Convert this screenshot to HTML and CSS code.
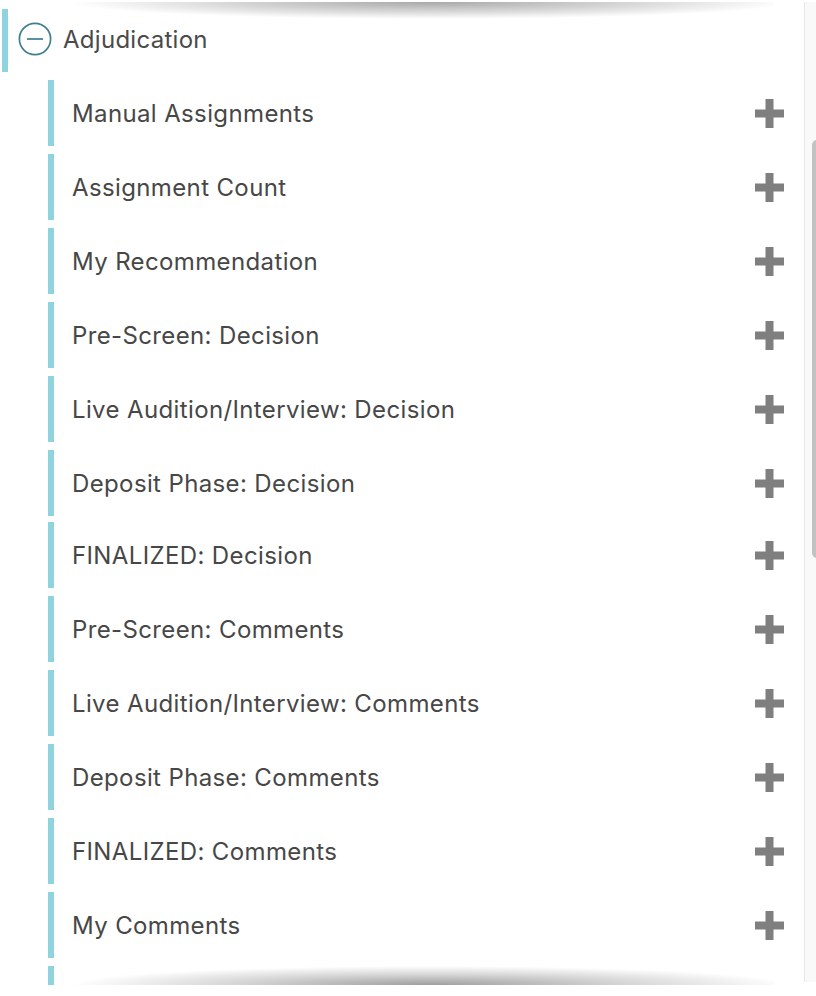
FILE: index.html
```html
<!DOCTYPE html>
<html lang="en">
<head>
<meta charset="utf-8">
<title>Adjudication</title>
<link rel="stylesheet" href="styles.css">
</head>
<body>
<div class="page">
  <div class="main">
    <div class="header">
      <svg class="minus-icon" width="34" height="34" viewBox="0 0 34 34">
        <circle cx="17" cy="17" r="15.6" fill="none" stroke="#3e7e92" stroke-width="1.7"/>
        <line x1="9" y1="17" x2="25" y2="17" stroke="#3e7e92" stroke-width="1.7"/>
      </svg>
      <span class="header-title">Adjudication</span>
    </div>
    <ul class="items">
      <li class="item"><span class="label">Manual Assignments</span><svg class="plus" width="29" height="29" viewBox="0 0 29 29"><rect x="0" y="10.5" width="29" height="8"/><rect x="10.5" y="0" width="8" height="29"/></svg></li>
      <li class="item"><span class="label">Assignment Count</span><svg class="plus" width="29" height="29" viewBox="0 0 29 29"><rect x="0" y="10.5" width="29" height="8"/><rect x="10.5" y="0" width="8" height="29"/></svg></li>
      <li class="item"><span class="label">My Recommendation</span><svg class="plus" width="29" height="29" viewBox="0 0 29 29"><rect x="0" y="10.5" width="29" height="8"/><rect x="10.5" y="0" width="8" height="29"/></svg></li>
      <li class="item"><span class="label">Pre-Screen: Decision</span><svg class="plus" width="29" height="29" viewBox="0 0 29 29"><rect x="0" y="10.5" width="29" height="8"/><rect x="10.5" y="0" width="8" height="29"/></svg></li>
      <li class="item"><span class="label">Live Audition/Interview: Decision</span><svg class="plus" width="29" height="29" viewBox="0 0 29 29"><rect x="0" y="10.5" width="29" height="8"/><rect x="10.5" y="0" width="8" height="29"/></svg></li>
      <li class="item"><span class="label">Deposit Phase: Decision</span><svg class="plus" width="29" height="29" viewBox="0 0 29 29"><rect x="0" y="10.5" width="29" height="8"/><rect x="10.5" y="0" width="8" height="29"/></svg></li>
      <li class="item item-tight"><span class="label">FINALIZED: Decision</span><svg class="plus" width="29" height="29" viewBox="0 0 29 29"><rect x="0" y="10.5" width="29" height="8"/><rect x="10.5" y="0" width="8" height="29"/></svg></li>
      <li class="item"><span class="label">Pre-Screen: Comments</span><svg class="plus" width="29" height="29" viewBox="0 0 29 29"><rect x="0" y="10.5" width="29" height="8"/><rect x="10.5" y="0" width="8" height="29"/></svg></li>
      <li class="item"><span class="label">Live Audition/Interview: Comments</span><svg class="plus" width="29" height="29" viewBox="0 0 29 29"><rect x="0" y="10.5" width="29" height="8"/><rect x="10.5" y="0" width="8" height="29"/></svg></li>
      <li class="item"><span class="label">Deposit Phase: Comments</span><svg class="plus" width="29" height="29" viewBox="0 0 29 29"><rect x="0" y="10.5" width="29" height="8"/><rect x="10.5" y="0" width="8" height="29"/></svg></li>
      <li class="item"><span class="label">FINALIZED: Comments</span><svg class="plus" width="29" height="29" viewBox="0 0 29 29"><rect x="0" y="10.5" width="29" height="8"/><rect x="10.5" y="0" width="8" height="29"/></svg></li>
      <li class="item"><span class="label">My Comments</span><svg class="plus" width="29" height="29" viewBox="0 0 29 29"><rect x="0" y="10.5" width="29" height="8"/><rect x="10.5" y="0" width="8" height="29"/></svg></li>
      <li class="item"><span class="label">&nbsp;</span></li>
    </ul>
    <div class="shadow shadow-top"></div>
    <div class="shadow shadow-bottom"></div>
  </div>
  <div class="scrollbar">
    <div class="thumb"></div>
  </div>
</div>
</body>
</html>
```

FILE: styles.css
```css
html, body {
  margin: 0;
  padding: 0;
  background: #ffffff;
}

body {
  font-family: Inter, "Liberation Sans", Arial, sans-serif;
  color: #484848;
}

.page {
  display: flex;
  height: 985px;
  overflow: hidden;
  width: 816px;
}

.main {
  position: relative;
  flex: 0 0 804px;
  padding-left: 2px;
  box-sizing: border-box;
  overflow: hidden;
}

.header {
  display: flex;
  align-items: center;
  margin-top: 9px;
  height: 63px;
  border-left: 6px solid #8fd3de;
  padding-left: 10px;
}

.minus-icon {
  display: block;
  margin-top: -3px;
}

.header-title {
  margin-left: 11px;
  font-size: 24px;
  color: #4a4a4a;
  letter-spacing: 0.28px;
  margin-top: -2px;
}

.items {
  list-style: none;
  margin: 8px 0 0 46px;
  padding: 0;
  display: flex;
  flex-direction: column;
  gap: 8px;
}

.item {
  display: flex;
  align-items: center;
  justify-content: space-between;
  height: 66px;
  flex: 0 0 66px;
  border-left: 6px solid #8fd3de;
  padding-left: 18px;
  padding-right: 20px;
}

.item-tight {
  margin-top: -2px;
}

.label {
  font-size: 24px;
  color: #474747;
  letter-spacing: 0.37px;
}

.plus {
  display: block;
  fill: #7f7f7f;
}

.shadow {
  position: absolute;
  left: 58px;
  width: 716px;
  pointer-events: none;
}

.shadow-top {
  top: 2px;
  height: 17px;
  background: radial-gradient(ellipse 360px 17px at 52% 0%, rgba(0,0,0,0.34) 0%, rgba(0,0,0,0.16) 55%, rgba(0,0,0,0) 100%);
}

.shadow-bottom {
  top: 966px;
  height: 19px;
  background: radial-gradient(ellipse 360px 19px at 52% 100%, rgba(0,0,0,0.38) 0%, rgba(0,0,0,0.16) 55%, rgba(0,0,0,0) 100%);
}

.scrollbar {
  flex: 0 0 11px;
  margin-top: 2px;
  height: 980px;
  background: #f9f9f9;
  border-left: 1px solid #e6e6e6;
  position: relative;
}

.thumb {
  margin-top: 138px;
  margin-left: 7px;
  width: 10px;
  height: 418px;
  background: #c2c2c2;
  border-radius: 6px;
}
```
